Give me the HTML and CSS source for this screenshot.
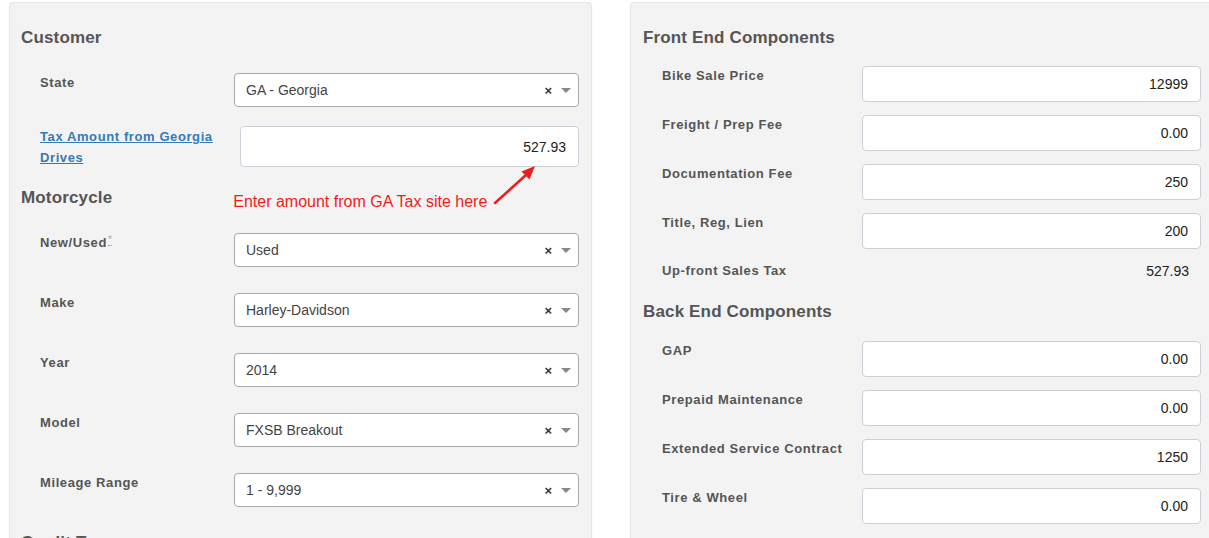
FILE: index.html
```html
<!DOCTYPE html>
<html>
<head>
<meta charset="utf-8">
<link rel="stylesheet" href="styles.css">
</head>
<body>
<div class="page">
  <section class="panel panel-left">
    <h3 class="heading">Customer</h3>
    <div class="row">
      <label class="label">State</label>
      <div class="select"><span class="sel-text">GA - Georgia</span><span class="sel-clear">×</span><span class="sel-arrow"></span></div>
    </div>
    <div class="row row-tax">
      <a class="label link" href="#">Tax Amount from Georgia Drives</a>
      <div class="input input-tax">527.93</div>
    </div>
    <div class="heading-row">
      <h3 class="heading">Motorcycle</h3>
      <span class="note">Enter amount from GA Tax site here</span>
    </div>
    <svg class="arrow" width="50" height="50" viewBox="0 0 50 50">
      <line x1="5" y1="42" x2="36" y2="14" stroke="#ee1c1c" stroke-width="2.5" stroke-linecap="round"/>
      <polygon points="45,5 39.5,18.5 31.5,10.5" fill="#ee1c1c"/>
    </svg>
    <div class="row">
      <label class="label">New/Used<abbr class="req" title="required">*</abbr></label>
      <div class="select"><span class="sel-text">Used</span><span class="sel-clear">×</span><span class="sel-arrow"></span></div>
    </div>
    <div class="row">
      <label class="label">Make</label>
      <div class="select"><span class="sel-text">Harley-Davidson</span><span class="sel-clear">×</span><span class="sel-arrow"></span></div>
    </div>
    <div class="row">
      <label class="label">Year</label>
      <div class="select"><span class="sel-text">2014</span><span class="sel-clear">×</span><span class="sel-arrow"></span></div>
    </div>
    <div class="row">
      <label class="label">Model</label>
      <div class="select"><span class="sel-text">FXSB Breakout</span><span class="sel-clear">×</span><span class="sel-arrow"></span></div>
    </div>
    <div class="row">
      <label class="label">Mileage Range</label>
      <div class="select"><span class="sel-text">1 - 9,999</span><span class="sel-clear">×</span><span class="sel-arrow"></span></div>
    </div>
    <h3 class="heading heading-next">Credit Terms</h3>
  </section>

  <section class="panel panel-right">
    <h3 class="heading">Front End Components</h3>
    <div class="rrow">
      <label class="rlabel">Bike Sale Price</label>
      <div class="input">12999</div>
    </div>
    <div class="rrow">
      <label class="rlabel">Freight / Prep Fee</label>
      <div class="input">0.00</div>
    </div>
    <div class="rrow">
      <label class="rlabel">Documentation Fee</label>
      <div class="input">250</div>
    </div>
    <div class="rrow">
      <label class="rlabel">Title, Reg, Lien</label>
      <div class="input">200</div>
    </div>
    <div class="rrow rrow-static">
      <label class="rlabel">Up-front Sales Tax</label>
      <div class="static">527.93</div>
    </div>
    <h3 class="heading heading-back">Back End Components</h3>
    <div class="rrow">
      <label class="rlabel">GAP</label>
      <div class="input">0.00</div>
    </div>
    <div class="rrow">
      <label class="rlabel">Prepaid Maintenance</label>
      <div class="input">0.00</div>
    </div>
    <div class="rrow">
      <label class="rlabel">Extended Service Contract</label>
      <div class="input">1250</div>
    </div>
    <div class="rrow">
      <label class="rlabel">Tire &amp; Wheel</label>
      <div class="input">0.00</div>
    </div>
  </section>
</div>
</body>
</html>
```

FILE: styles.css
```css
html, body {
  margin: 0;
  padding: 0;
  height: 538px;
  overflow: hidden;
  background: #fff;
  font-family: "Liberation Sans", Arial, sans-serif;
}

.page {
  display: flex;
  gap: 38px;
  padding: 2px 0 0 9px;
}

.panel {
  position: relative;
  flex: 0 0 auto;
  width: 583px;
  min-height: 620px;
  box-sizing: border-box;
  background: #f3f3f3;
  border: 1px solid #e6e6e6;
  border-radius: 4px;
  box-shadow: 0 1px 2px rgba(0, 0, 0, 0.06);
  padding-top: 25px;
}

.panel-left {
  padding-left: 11px;
  padding-right: 12px;
}

.panel-right {
  padding-left: 12px;
  width: 585px;
}

.heading {
  margin: 0 0 25px 0;
  font-size: 17px;
  line-height: 20px;
  font-weight: bold;
  color: #555;
  letter-spacing: 0.15px;
}

.row {
  display: flex;
  align-items: flex-start;
  margin-bottom: 26px;
}

.row-tax {
  margin-top: -7px;
  margin-bottom: 20px;
}

.label {
  flex: 0 0 213px;
  box-sizing: border-box;
  padding-left: 19px;
  padding-right: 6px;
  font-size: 13px;
  line-height: 20px;
  font-weight: bold;
  color: #555;
  letter-spacing: 0.6px;
}

.link {
  display: block;
  color: #337ab7;
  text-decoration: underline;
  line-height: 21px;
}

.req {
  display: inline-block;
  font-size: 10px;
  line-height: 10px;
  color: #aaa;
  vertical-align: top;
  margin-top: 2px;
  border-bottom: 1px dotted #999;
  text-decoration: none;
  font-weight: normal;
  margin-left: 1px;
  letter-spacing: 0;
}

.select {
  flex: 1 1 auto;
  display: flex;
  align-items: center;
  height: 34px;
  box-sizing: border-box;
  background: #fff;
  border: 1px solid #aaa;
  border-radius: 4px;
  padding: 0 7px 0 11px;
  font-size: 14px;
  color: #444;
}

.sel-text {
  flex: 1 1 auto;
}

.sel-clear {
  font-size: 13px;
  font-weight: bold;
  color: #333;
  margin-right: 9px;
  line-height: 1;
}

.sel-arrow {
  width: 0;
  height: 0;
  border-left: 5px solid transparent;
  border-right: 5px solid transparent;
  border-top: 5px solid #888;
}

.input {
  flex: 1 1 auto;
  box-sizing: border-box;
  height: 36px;
  background: #fff;
  border: 1px solid #ccd1d9;
  border-radius: 4px;
  padding: 0 12px;
  display: flex;
  align-items: center;
  justify-content: flex-end;
  font-size: 14px;
  color: #222;
}

.input-tax {
  height: 41px;
  margin-left: 6px;
}

.heading-row {
  display: flex;
  align-items: flex-start;
  margin-bottom: 21px;
}

.heading-row .heading {
  margin: 0;
}

.note {
  margin-left: 121px;
  margin-top: 4px;
  font-size: 16px;
  line-height: 20px;
  color: #ee1c1c;
}

.arrow {
  position: absolute;
  left: 480px;
  top: 158px;
}

.heading-next {
  margin-top: 0;
}

.rrow {
  display: flex;
  align-items: flex-start;
  margin-bottom: 13px;
  margin-right: 13px;
}

.rlabel {
  flex: 0 0 219px;
  box-sizing: border-box;
  padding-left: 19px;
  font-size: 13px;
  line-height: 20px;
  font-weight: bold;
  color: #555;
  letter-spacing: 0.6px;
}

.rrow-static {
  margin-top: -1px;
  margin-bottom: 21px;
  align-items: center;
}

.static {
  flex: 1 1 auto;
  text-align: right;
  padding-right: 12px;
  font-size: 14px;
  color: #222;
  line-height: 20px;
}

.panel-right .heading {
  margin-bottom: 18px;
}

.panel-right .heading-back {
  margin-bottom: 19px;
}
```
